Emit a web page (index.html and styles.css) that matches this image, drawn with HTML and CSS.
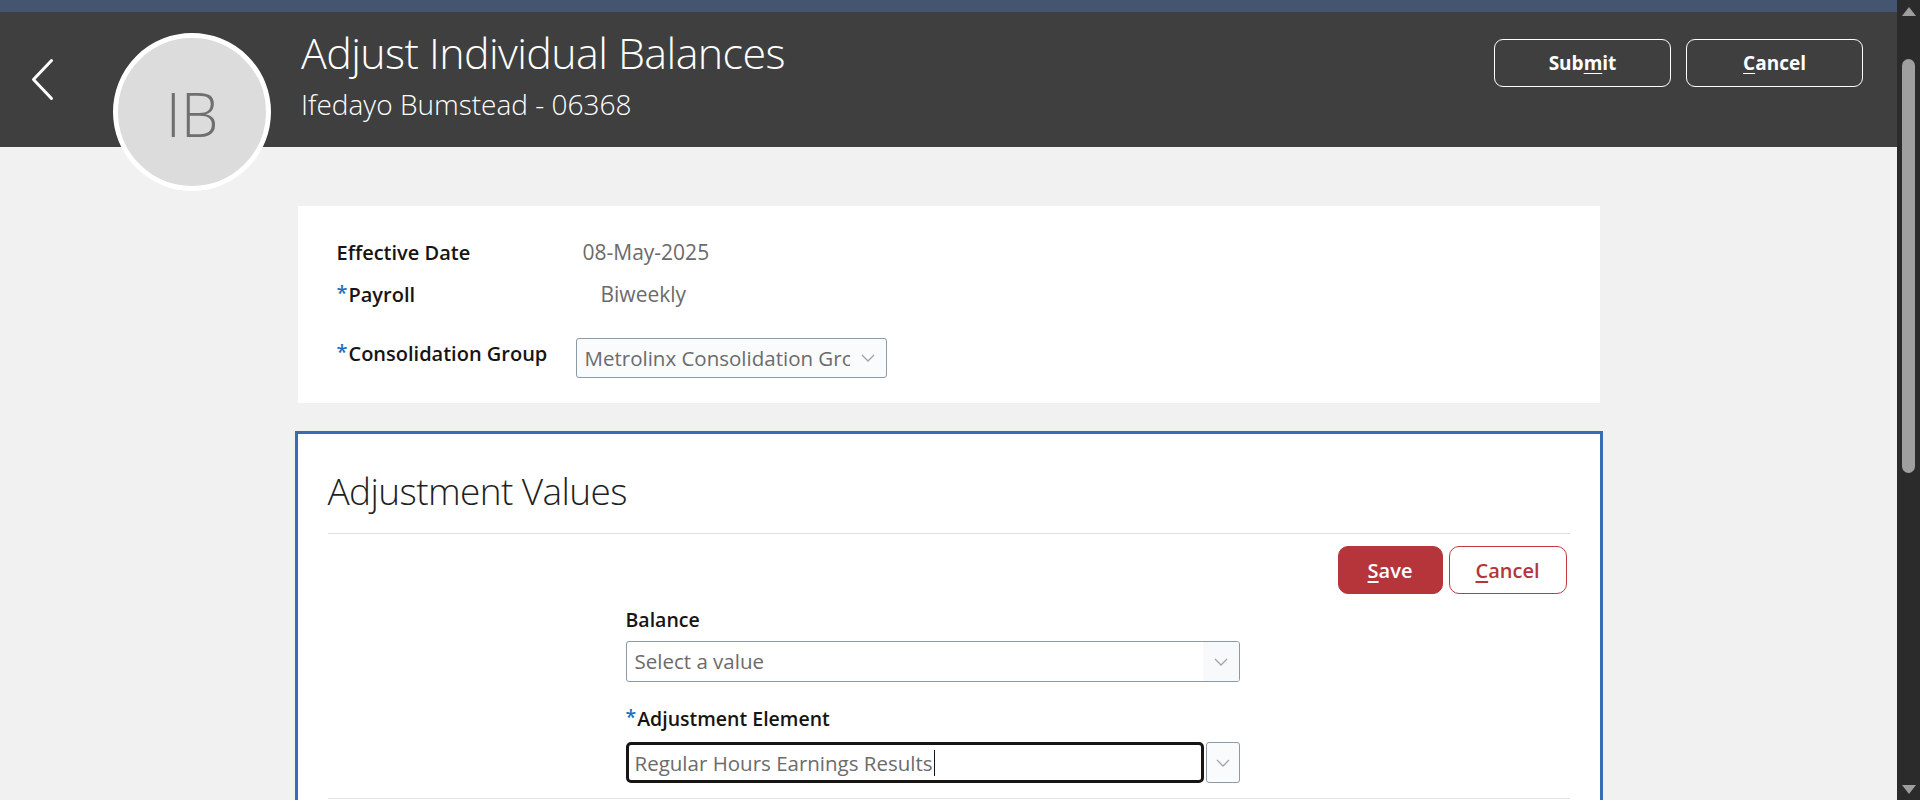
FILE: index.html
```html
<!DOCTYPE html>
<html lang="en">
<head>
<meta charset="utf-8">
<title>Adjust Individual Balances</title>
<link rel="stylesheet" href="styles.css">
</head>
<body>
<div class="app">
  <div class="page">
    <div class="topstrip"></div>
    <header class="hdr">
      <button class="back" aria-label="Back">
        <svg width="25" height="45" viewBox="0 0 25 45"><path d="M21.5 3.5 L3.5 22.5 L21.5 41.5" fill="none" stroke="#fff" stroke-width="3" stroke-linecap="round" stroke-linejoin="round"/></svg>
      </button>
      <div class="avatar">IB</div>
      <div class="titles">
        <h1 class="title">Adjust Individual Balances</h1>
        <div class="subtitle">Ifedayo Bumstead - 06368</div>
      </div>
      <div class="hdr-actions">
        <button class="hbtn">Sub<u>m</u>it</button>
        <button class="hbtn"><u>C</u>ancel</button>
      </div>
    </header>
    <main class="content">
      <section class="card info">
        <div class="row">
          <div class="lbl">Effective Date</div>
          <div class="val val-date">08-May-2025</div>
        </div>
        <div class="row">
          <div class="lbl"><span class="req">*</span>Payroll</div>
          <div class="val val-payroll">Biweekly</div>
        </div>
        <div class="row row-select">
          <div class="lbl"><span class="req">*</span>Consolidation Group</div>
          <div class="select select-cg">
            <span class="select-text">Metrolinx Consolidation Group</span>
            <span class="select-arrow"><svg width="14" height="8" viewBox="0 0 14 8"><path d="M1 1 L7 7 L13 1" fill="none" stroke="#a3a3a3" stroke-width="1.3"/></svg></span>
          </div>
        </div>
      </section>
      <section class="card panel">
        <h2 class="panel-title">Adjustment Values</h2>
        <div class="sep"></div>
        <div class="toolbar">
          <button class="btn btn-save"><u>S</u>ave</button>
          <button class="btn btn-cancel"><u>C</u>ancel</button>
        </div>
        <div class="form">
          <div class="field">
            <label class="flbl">Balance</label>
            <div class="select select-wide">
              <span class="select-text">Select a value</span>
              <span class="select-arrow shaded"><svg width="14" height="8" viewBox="0 0 14 8"><path d="M1 1 L7 7 L13 1" fill="none" stroke="#a3a3a3" stroke-width="1.3"/></svg></span>
            </div>
          </div>
          <div class="field field-2">
            <label class="flbl"><span class="req">*</span>Adjustment Element</label>
            <div class="combo">
              <div class="combo-input"><span class="combo-text">Regular Hours Earnings Results</span><span class="caret"></span></div>
              <div class="combo-btn"><svg width="14" height="8" viewBox="0 0 14 8"><path d="M1 1 L7 7 L13 1" fill="none" stroke="#a3a3a3" stroke-width="1.3"/></svg></div>
            </div>
          </div>
        </div>
        <div class="sep sep-bottom"></div>
      </section>
    </main>
  </div>
  <div class="scrollbar">
    <div class="sb-up"></div>
    <div class="sb-thumb"></div>
    <div class="sb-track"></div>
    <div class="sb-down"></div>
  </div>
</div>
</body>
</html>
```
FILE: styles.css
```css
* { box-sizing: border-box; }
html, body { margin: 0; padding: 0; }
body {
  font-family: "Open Sans", "Noto Sans", sans-serif;
  background: #f1f1f1;
  overflow: hidden;
  color: #161513;
}
.app {
  display: flex;
  width: 1920px;
  height: 800px;
  overflow: hidden;
}
.page {
  flex: 1;
  min-width: 0;
  background: #f1f1f1;
}
.topstrip {
  height: 12px;
  background: #44566f;
}
.hdr {
  height: 135px;
  background: #3f3f3f;
  display: flex;
  align-items: flex-start;
  position: relative;
  z-index: 1;
}
.back {
  background: none;
  border: 0;
  padding: 0;
  margin: 45px 0 0 30px;
  width: 25px;
  height: 45px;
  display: block;
}
.back svg { display: block; }
.avatar {
  margin: 21px 0 0 58px;
  width: 158px;
  height: 158px;
  flex: none;
  border-radius: 50%;
  border: 5px solid #fff;
  background: #dcdcdc;
  color: #6f6f6f;
  font-size: 60px;
  font-weight: 300;
  display: flex;
  align-items: center;
  justify-content: center;
  padding-top: 4px;
}
.titles {
  margin: 15px 0 0 30px;
  color: #fff;
}
.title {
  margin: 0;
  font-size: 43px;
  font-weight: 300;
  line-height: 52px;
  letter-spacing: -0.6px;
}
.subtitle {
  font-size: 28px;
  font-weight: 300;
  line-height: 34px;
  margin-top: 8px;
}
.hdr-actions {
  margin: 27px 34px 0 auto;
  display: flex;
  gap: 15px;
}
.hbtn {
  width: 177px;
  height: 48px;
  border: 1px solid #fff;
  border-radius: 9px;
  background: transparent;
  color: #fff;
  font-family: inherit;
  font-size: 19px;
  font-weight: 700;
  padding: 0;
}
.hbtn u { text-underline-offset: 3px; }

.content {
  padding-top: 59px;
  display: flex;
  flex-direction: column;
  align-items: center;
}
.card {
  background: #fff;
  width: 1302px;
}
.info {
  padding: 30px 39px 24px;
}
.row {
  display: flex;
  height: 32px;
  align-items: center;
  margin-bottom: 10px;
}
.row-select {
  margin: 28px 0 0;
  height: 41px;
  align-items: flex-start;
}
.lbl {
  width: 239px;
  flex: none;
  font-size: 20px;
  font-weight: 600;
  color: #161513;
  white-space: nowrap;
}
.row-select .lbl { line-height: 32px; }
.req {
  color: #1f6fbf;
  font-weight: 600;
  margin-right: 1px;
  position: relative;
  top: -2px;
}
.val {
  font-size: 21px;
  color: #6b6b6b;
}
.val-date { padding-left: 7px; }
.val-payroll { padding-left: 25px; }

.select {
  display: flex;
  align-items: stretch;
  border: 1px solid #8a9aa6;
  border-radius: 3px;
  height: 41px;
  background: #fff;
  overflow: hidden;
}
.select-text {
  flex: 1;
  min-width: 0;
  white-space: nowrap;
  overflow: hidden;
  font-size: 20.5px;
  color: #6b6b6b;
  line-height: 39px;
  padding-left: 8px;
}
.select-arrow {
  width: 36px;
  flex: none;
  display: flex;
  align-items: center;
  justify-content: center;
}
.select-arrow.shaded { background: #f8f9fa; }
.select-cg {
  width: 311px;
  background: #f9fbfd;
  height: 40px;
}
.select-cg .select-text { line-height: 38px; }

.panel {
  margin-top: 28px;
  width: 1308px;
  border: 3px solid #3a6cb6;
  padding-bottom: 0;
  height: 380px;
}
.panel-title {
  margin: 0;
  padding: 37px 30px 22px;
  font-size: 37px;
  font-weight: 300;
  line-height: 40px;
  letter-spacing: -0.6px;
  color: #1f1f1f;
}
.sep {
  height: 1px;
  background: #dcdfe4;
  margin: 0 30px 0 30px;
}
.toolbar {
  display: flex;
  justify-content: flex-end;
  gap: 6px;
  padding: 12px 33px 0 0;
}
.btn {
  height: 48px;
  border-radius: 10px;
  font-family: inherit;
  font-size: 20px;
  font-weight: 600;
  padding: 0;
}
.btn u { text-underline-offset: 3px; }
.btn-save {
  width: 105px;
  background: #b5353b;
  border: 1px solid #b5353b;
  color: #fff;
}
.btn-cancel {
  width: 118px;
  background: #fff;
  border: 1px solid #c0393f;
  color: #b5353b;
}
.form {
  padding: 14px 0 0 328px;
}
.field { width: 614px; }
.flbl {
  display: block;
  font-size: 19.5px;
  font-weight: 600;
  line-height: 24px;
  margin-bottom: 9px;
}
.field-2 { margin-top: 25px; }
.field-2 .flbl { margin-bottom: 11px; }
.combo {
  display: flex;
  gap: 2px;
  height: 41px;
}
.combo-input {
  flex: 1;
  border: 3px solid #161513;
  border-radius: 5px;
  display: flex;
  align-items: center;
  padding-left: 6px;
}
.combo-text {
  font-size: 20.5px;
  color: #6b6b6b;
}
.caret {
  width: 1px;
  height: 26px;
  background: #161513;
  margin-left: 1px;
}
.combo-btn {
  width: 34px;
  border: 1px solid #8a9aa6;
  border-radius: 3px;
  background: #fafbfc;
  display: flex;
  align-items: center;
  justify-content: center;
}
.sep-bottom {
  margin-top: 15px;
  background: #e3e3e3;
}

.scrollbar {
  width: 23px;
  flex: none;
  background: #2b2b2b;
  display: flex;
  flex-direction: column;
  align-items: center;
}
.sb-up {
  margin-top: 7px;
  width: 0;
  height: 0;
  border-left: 7px solid transparent;
  border-right: 7px solid transparent;
  border-bottom: 9px solid #9e9e9e;
}
.sb-thumb {
  margin-top: 43px;
  width: 13px;
  height: 414px;
  border-radius: 7px;
  background: #9f9f9f;
}
.sb-track { flex: 1; }
.sb-down {
  margin-bottom: 6px;
  width: 0;
  height: 0;
  border-left: 7px solid transparent;
  border-right: 7px solid transparent;
  border-top: 9px solid #9e9e9e;
}
```
